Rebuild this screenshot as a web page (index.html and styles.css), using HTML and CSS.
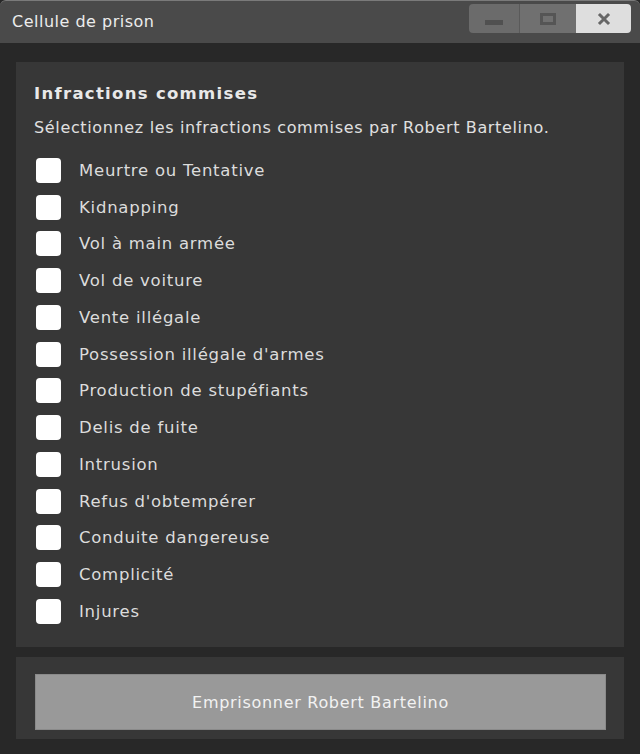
FILE: index.html
```html
<!DOCTYPE html>
<html lang="fr">
<head>
<meta charset="utf-8">
<title>Cellule de prison</title>
<link rel="stylesheet" href="styles.css">
</head>
<body>
<div class="window">
  <div class="titlebar">
    <span class="title">Cellule de prison</span>
    <div class="controls">
      <div class="ctl ctl-min"><span class="min-bar"></span></div>
      <div class="ctl ctl-max"><span class="max-box"></span></div>
      <div class="ctl ctl-close">
        <svg width="14" height="14" viewBox="0 0 14 14"><path d="M3 3 L11 11 M11 3 L3 11" stroke="#666" stroke-width="3" stroke-linecap="square"/></svg>
      </div>
    </div>
  </div>
  <div class="content">
    <div class="panel list-panel">
      <div class="heading">Infractions commises</div>
      <div class="desc">Sélectionnez les infractions commises par Robert Bartelino.</div>
      <ul class="items">
        <li><span class="box"></span>Meurtre ou Tentative</li>
        <li><span class="box"></span>Kidnapping</li>
        <li><span class="box"></span>Vol à main armée</li>
        <li><span class="box"></span>Vol de voiture</li>
        <li><span class="box"></span>Vente illégale</li>
        <li><span class="box"></span>Possession illégale d'armes</li>
        <li><span class="box"></span>Production de stupéfiants</li>
        <li><span class="box"></span>Delis de fuite</li>
        <li><span class="box"></span>Intrusion</li>
        <li><span class="box"></span>Refus d'obtempérer</li>
        <li><span class="box"></span>Conduite dangereuse</li>
        <li><span class="box"></span>Complicité</li>
        <li><span class="box"></span>Injures</li>
      </ul>
    </div>
    <div class="panel action-panel">
      <div class="btn">Emprisonner Robert Bartelino</div>
    </div>
  </div>
</div>
</body>
</html>
```
FILE: styles.css
```css
* { box-sizing: border-box; }
html, body { margin: 0; padding: 0; background: #282828; }
body { font-family: "DejaVu Sans", "Noto Sans", sans-serif; color: #e6e6e6; }
.window { width: 640px; height: 754px; background: #282828; display: flex; flex-direction: column; }
.titlebar {
  height: 43px; background: #4a4a4a; border-top: 1px solid #7a7a7a;
  border-radius: 6px 6px 0 0;
  display: flex; align-items: center; justify-content: space-between;
  padding: 0 9px 0 12px;
}
.title { font-size: 16px; letter-spacing: 0.5px; color: #ececec; margin-top: -2px; }
.controls { display: flex; height: 29px; margin-top: -7px; border-radius: 4px; overflow: hidden; }
.ctl { width: 51px; height: 29px; display: flex; align-items: center; justify-content: center; }
.ctl-min { background: #6b6b6b; border-right: 1px solid #5a5a5a; }
.ctl-max { background: #707070; width: 56px; }
.ctl-close { background: #dedede; width: 55px; }
.min-bar { width: 18px; height: 5px; background: #505050; margin-top: 8px; }
.max-box { width: 16px; height: 12px; border: 3px solid #555; }
.content { flex: 1; display: flex; flex-direction: column; gap: 10px; padding: 19px 16px 15px 16px; }
.panel { background: #373737; }
.list-panel { height: 585px; padding: 20px 18px 0 18px; }
.heading { font-size: 16.5px; letter-spacing: 1.3px; font-weight: bold; color: #e8e8e8; line-height: 24px; }
.desc { font-size: 16px; letter-spacing: 0.65px; color: #e0e0e0; line-height: 22px; margin-top: 11px; }
.items { list-style: none; margin: 13px 0 0 0; padding: 0; }
.items li { display: flex; align-items: center; height: 36.75px; font-size: 16.5px; letter-spacing: 0.75px; color: #dcdcdc; }
.box { width: 25px; height: 25px; background: #fff; border-radius: 4px; margin: 0 18px 0 2px; flex: none; }
.action-panel { flex: 1; padding: 17px 18px 9px 19px; }
.btn {
  height: 56px; background: #999; border: 1px solid #8a8a8a;
  display: flex; align-items: center; justify-content: center;
  font-size: 16px; letter-spacing: 0.7px; color: #f2f2f2;
}
```
